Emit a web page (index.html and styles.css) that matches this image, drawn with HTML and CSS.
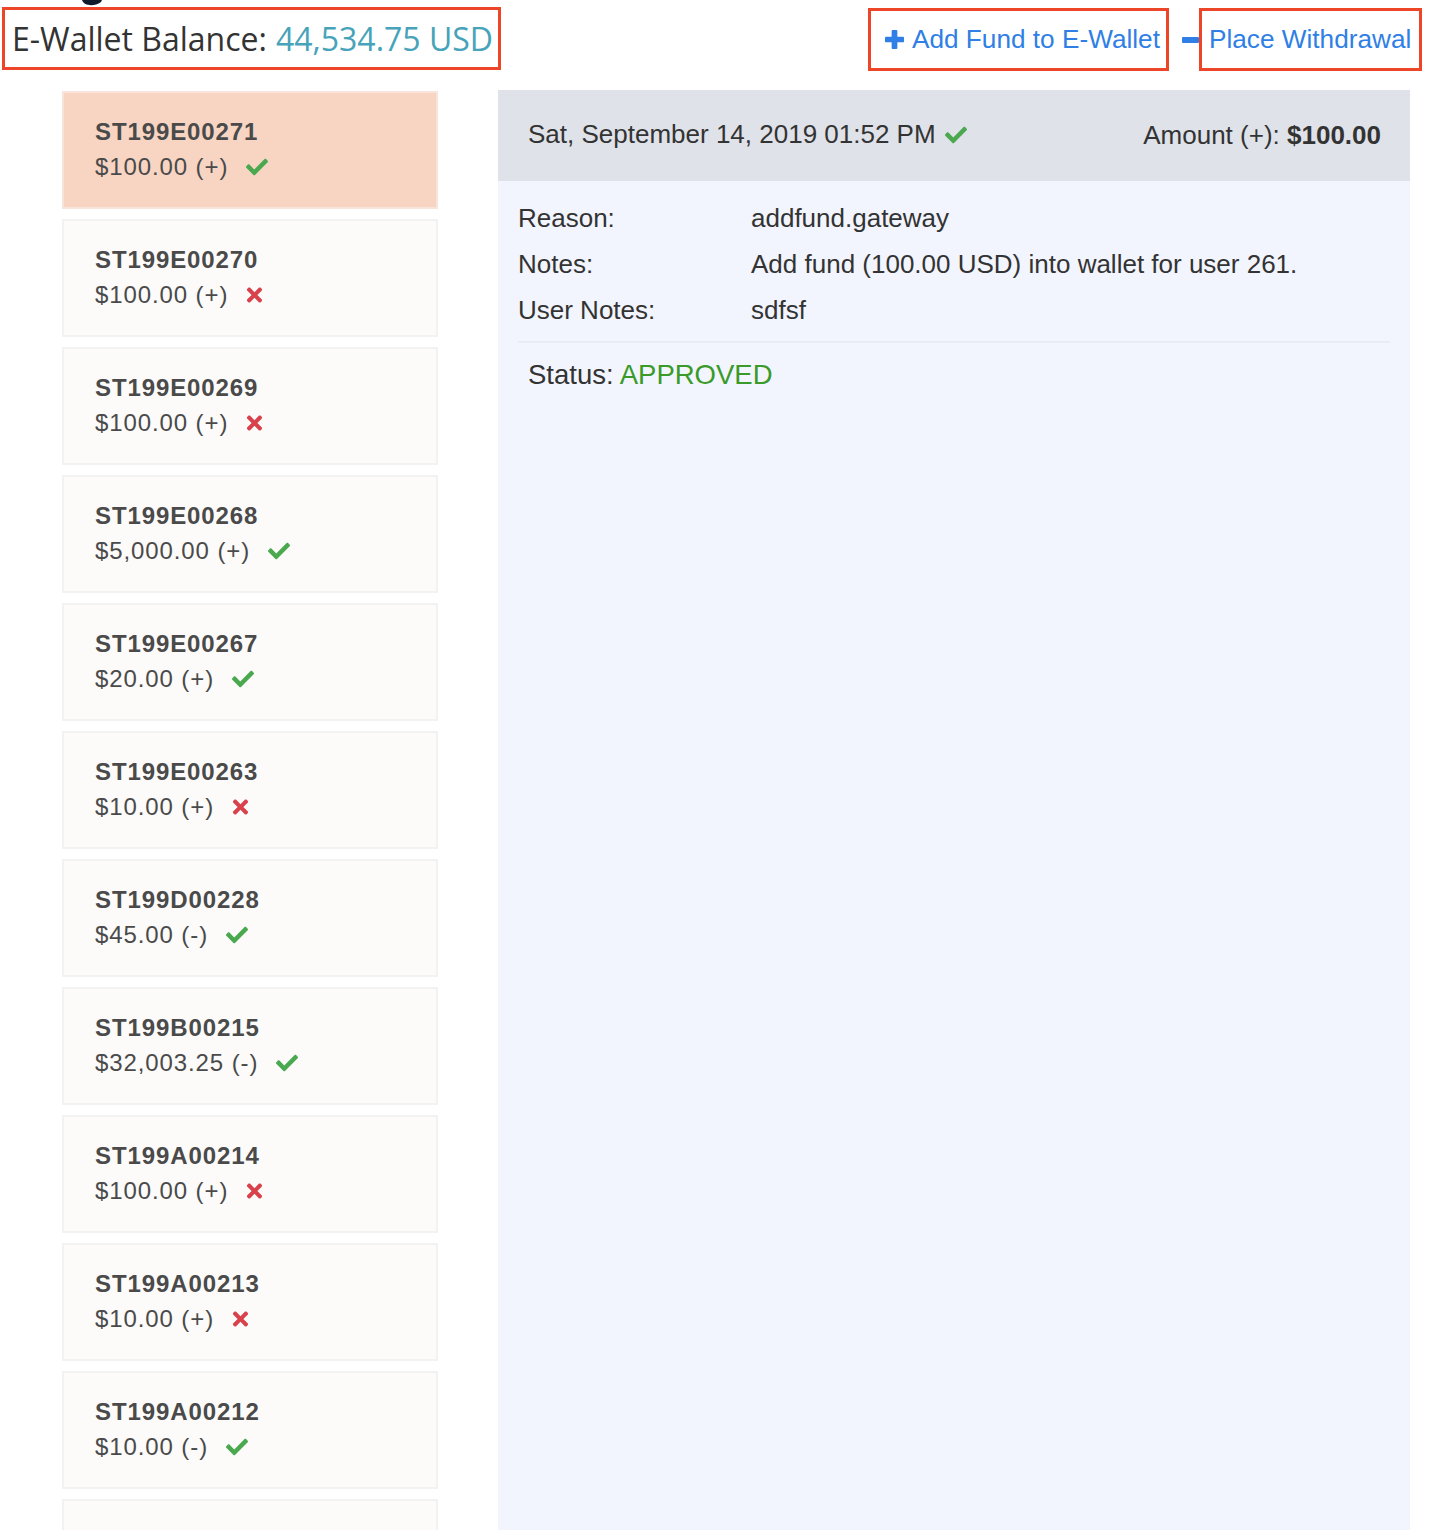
FILE: index.html
```html
<!DOCTYPE html>
<html lang="en">
<head>
<meta charset="utf-8">
<title>E-Wallet</title>
<link rel="stylesheet" href="styles.css">
</head>
<body>
<svg class="title-tail" viewBox="0 0 24 8" aria-hidden="true"><path d="M2 0 C4 6 14 7 21 2 L22 0 Z"/></svg>
<header class="topbar">
  <div class="balance hl">E-Wallet Balance: <span class="balance-amount">44,534.75 USD</span></div>
  <nav class="actions">
    <a class="action hl add" href="#"><svg class="ico-plus" viewBox="0 0 20 20"><rect x="7" y="0" width="6" height="20" rx="1"/><rect x="0" y="7" width="20" height="6" rx="1"/></svg>Add Fund to E-Wallet</a>
    <span class="minus"></span>
    <a class="action hl withdraw" href="#">Place Withdrawal</a>
  </nav>
</header>

<main class="main">
  <section class="list">
    <div class="card selected"><div class="cid">ST199E00271</div><div class="camt">$100.00 (+)<svg class="ok" viewBox="0 0 512 512"><path d="M173.9 439.4l-166.4-166.4c-10-10-10-26.2 0-36.2l36.2-36.2c10-10 26.2-10 36.2 0L192 312.7 432.1 72.6c10-10 26.2-10 36.2 0l36.2 36.2c10 10 10 26.2 0 36.2l-294.4 294.4c-10 10-26.2 10-36.2 0z"/></svg></div></div>
    <div class="card"><div class="cid">ST199E00270</div><div class="camt">$100.00 (+)<svg class="no" viewBox="0 0 352 512"><path d="M242.7 256l100.1-100.1c12.3-12.3 12.3-32.2 0-44.5l-22.2-22.2c-12.3-12.3-32.2-12.3-44.5 0L176 189.3 75.9 89.2c-12.3-12.3-32.2-12.3-44.5 0L9.2 111.5c-12.3 12.3-12.3 32.2 0 44.5L109.3 256 9.2 356.1c-12.3 12.3-12.3 32.2 0 44.5l22.2 22.2c12.3 12.3 32.2 12.3 44.5 0L176 322.7l100.1 100.1c12.3 12.3 32.2 12.3 44.5 0l22.2-22.2c12.3-12.3 12.3-32.2 0-44.5L242.7 256z"/></svg></div></div>
    <div class="card"><div class="cid">ST199E00269</div><div class="camt">$100.00 (+)<svg class="no" viewBox="0 0 352 512"><path d="M242.7 256l100.1-100.1c12.3-12.3 12.3-32.2 0-44.5l-22.2-22.2c-12.3-12.3-32.2-12.3-44.5 0L176 189.3 75.9 89.2c-12.3-12.3-32.2-12.3-44.5 0L9.2 111.5c-12.3 12.3-12.3 32.2 0 44.5L109.3 256 9.2 356.1c-12.3 12.3-12.3 32.2 0 44.5l22.2 22.2c12.3 12.3 32.2 12.3 44.5 0L176 322.7l100.1 100.1c12.3 12.3 32.2 12.3 44.5 0l22.2-22.2c12.3-12.3 12.3-32.2 0-44.5L242.7 256z"/></svg></div></div>
    <div class="card"><div class="cid">ST199E00268</div><div class="camt">$5,000.00 (+)<svg class="ok" viewBox="0 0 512 512"><path d="M173.9 439.4l-166.4-166.4c-10-10-10-26.2 0-36.2l36.2-36.2c10-10 26.2-10 36.2 0L192 312.7 432.1 72.6c10-10 26.2-10 36.2 0l36.2 36.2c10 10 10 26.2 0 36.2l-294.4 294.4c-10 10-26.2 10-36.2 0z"/></svg></div></div>
    <div class="card"><div class="cid">ST199E00267</div><div class="camt">$20.00 (+)<svg class="ok" viewBox="0 0 512 512"><path d="M173.9 439.4l-166.4-166.4c-10-10-10-26.2 0-36.2l36.2-36.2c10-10 26.2-10 36.2 0L192 312.7 432.1 72.6c10-10 26.2-10 36.2 0l36.2 36.2c10 10 10 26.2 0 36.2l-294.4 294.4c-10 10-26.2 10-36.2 0z"/></svg></div></div>
    <div class="card"><div class="cid">ST199E00263</div><div class="camt">$10.00 (+)<svg class="no" viewBox="0 0 352 512"><path d="M242.7 256l100.1-100.1c12.3-12.3 12.3-32.2 0-44.5l-22.2-22.2c-12.3-12.3-32.2-12.3-44.5 0L176 189.3 75.9 89.2c-12.3-12.3-32.2-12.3-44.5 0L9.2 111.5c-12.3 12.3-12.3 32.2 0 44.5L109.3 256 9.2 356.1c-12.3 12.3-12.3 32.2 0 44.5l22.2 22.2c12.3 12.3 32.2 12.3 44.5 0L176 322.7l100.1 100.1c12.3 12.3 32.2 12.3 44.5 0l22.2-22.2c12.3-12.3 12.3-32.2 0-44.5L242.7 256z"/></svg></div></div>
    <div class="card"><div class="cid">ST199D00228</div><div class="camt">$45.00 (-)<svg class="ok" viewBox="0 0 512 512"><path d="M173.9 439.4l-166.4-166.4c-10-10-10-26.2 0-36.2l36.2-36.2c10-10 26.2-10 36.2 0L192 312.7 432.1 72.6c10-10 26.2-10 36.2 0l36.2 36.2c10 10 10 26.2 0 36.2l-294.4 294.4c-10 10-26.2 10-36.2 0z"/></svg></div></div>
    <div class="card"><div class="cid">ST199B00215</div><div class="camt">$32,003.25 (-)<svg class="ok" viewBox="0 0 512 512"><path d="M173.9 439.4l-166.4-166.4c-10-10-10-26.2 0-36.2l36.2-36.2c10-10 26.2-10 36.2 0L192 312.7 432.1 72.6c10-10 26.2-10 36.2 0l36.2 36.2c10 10 10 26.2 0 36.2l-294.4 294.4c-10 10-26.2 10-36.2 0z"/></svg></div></div>
    <div class="card"><div class="cid">ST199A00214</div><div class="camt">$100.00 (+)<svg class="no" viewBox="0 0 352 512"><path d="M242.7 256l100.1-100.1c12.3-12.3 12.3-32.2 0-44.5l-22.2-22.2c-12.3-12.3-32.2-12.3-44.5 0L176 189.3 75.9 89.2c-12.3-12.3-32.2-12.3-44.5 0L9.2 111.5c-12.3 12.3-12.3 32.2 0 44.5L109.3 256 9.2 356.1c-12.3 12.3-12.3 32.2 0 44.5l22.2 22.2c12.3 12.3 32.2 12.3 44.5 0L176 322.7l100.1 100.1c12.3 12.3 32.2 12.3 44.5 0l22.2-22.2c12.3-12.3 12.3-32.2 0-44.5L242.7 256z"/></svg></div></div>
    <div class="card"><div class="cid">ST199A00213</div><div class="camt">$10.00 (+)<svg class="no" viewBox="0 0 352 512"><path d="M242.7 256l100.1-100.1c12.3-12.3 12.3-32.2 0-44.5l-22.2-22.2c-12.3-12.3-32.2-12.3-44.5 0L176 189.3 75.9 89.2c-12.3-12.3-32.2-12.3-44.5 0L9.2 111.5c-12.3 12.3-12.3 32.2 0 44.5L109.3 256 9.2 356.1c-12.3 12.3-12.3 32.2 0 44.5l22.2 22.2c12.3 12.3 32.2 12.3 44.5 0L176 322.7l100.1 100.1c12.3 12.3 32.2 12.3 44.5 0l22.2-22.2c12.3-12.3 12.3-32.2 0-44.5L242.7 256z"/></svg></div></div>
    <div class="card"><div class="cid">ST199A00212</div><div class="camt">$10.00 (-)<svg class="ok" viewBox="0 0 512 512"><path d="M173.9 439.4l-166.4-166.4c-10-10-10-26.2 0-36.2l36.2-36.2c10-10 26.2-10 36.2 0L192 312.7 432.1 72.6c10-10 26.2-10 36.2 0l36.2 36.2c10 10 10 26.2 0 36.2l-294.4 294.4c-10 10-26.2 10-36.2 0z"/></svg></div></div>
    <div class="card"></div>
  </section>

  <section class="detail">
    <div class="detail-head">
      <div class="date">Sat, September 14, 2019 01:52 PM<svg class="ok" viewBox="0 0 512 512"><path d="M173.9 439.4l-166.4-166.4c-10-10-10-26.2 0-36.2l36.2-36.2c10-10 26.2-10 36.2 0L192 312.7 432.1 72.6c10-10 26.2-10 36.2 0l36.2 36.2c10 10 10 26.2 0 36.2l-294.4 294.4c-10 10-26.2 10-36.2 0z"/></svg></div>
      <div class="amount">Amount (+): <b>$100.00</b></div>
    </div>
    <div class="detail-body">
      <div class="rows">
        <div class="row"><span class="k">Reason:</span><span class="v">addfund.gateway</span></div>
        <div class="row"><span class="k">Notes:</span><span class="v">Add fund (100.00 USD) into wallet for user 261.</span></div>
        <div class="row"><span class="k">User Notes:</span><span class="v">sdfsf</span></div>
      </div>
      <div class="status">Status: <span class="approved">APPROVED</span></div>
    </div>
  </section>
</main>
</body>
</html>
```

FILE: styles.css
```css
html, body {
  margin: 0;
  padding: 0;
  background: #ffffff;
  height: 1530px;
  overflow: hidden;
}
body {
  font-family: "Liberation Sans", Arial, sans-serif;
  color: #333333;
  position: relative;
}
.title-tail {
  position: absolute;
  left: 80px;
  top: 0;
  width: 24px;
  height: 8px;
  fill: #0f1b2d;
}
.topbar {
  display: flex;
  justify-content: space-between;
  align-items: flex-start;
  padding: 7px 14px 0 2px;
}
.hl {
  border: 3px solid #ec4528;
  box-sizing: border-box;
  height: 63px;
  display: flex;
  align-items: center;
}
.balance {
  font-family: "Open Sans", sans-serif;
  font-size: 32px;
  color: #333;
  padding: 0 6px 0 7px;
  width: 499px;
  white-space: nowrap;
}
.balance-amount {
  color: #47a3ba;
  margin-left: 9px;
}
.actions {
  display: flex;
  align-items: flex-start;
}
.action {
  font-size: 26.2px;
  color: #2f7fe6;
  text-decoration: none;
  white-space: nowrap;
}
.add {
  width: 301px;
  padding-left: 14px;
  margin-top: 1px;
}
.ico-plus {
  width: 19px;
  height: 19px;
  fill: #2f7fe6;
  margin-right: 8px;
  flex: none;
}
.minus {
  width: 17px;
  height: 6px;
  background: #2f7fe6;
  margin: 30px 0 0 13px;
  border-radius: 1px;
}
.withdraw {
  width: 223px;
  padding-left: 7px;
  margin-top: 1px;
}
.main {
  display: flex;
  align-items: flex-start;
  margin-top: 19px;
  height: 1440px;
  overflow: hidden;
}
.list {
  display: flex;
  flex-direction: column;
  gap: 10px;
  margin-left: 62px;
  margin-top: 1px;
  width: 376px;
  flex: none;
}
.card {
  box-sizing: border-box;
  height: 118px;
  flex: none;
  background: #fcfbfa;
  border: 2px solid #f3f2f0;
  padding: 24px 0 0 31px;
  letter-spacing: 0.9px;
  font-size: 24px;
  color: #4a4a4a;
}
.card.selected {
  background: #f8d5c3;
  border-color: #f8e4da;
}
.cid {
  font-weight: bold;
  line-height: 30px;
}
.camt {
  margin-top: 5px;
  line-height: 30px;
  display: flex;
  align-items: center;
  gap: 18px;
  white-space: nowrap;
}
.ok {
  width: 22px;
  height: 22px;
  fill: #4aa84f;
  flex: none;
}
.no {
  width: 17px;
  height: 22px;
  fill: #d9414b;
  flex: none;
}
.detail {
  margin-left: 60px;
  width: 912px;
  height: 1440px;
  background: #f2f5fd;
  flex: none;
}
.detail-head {
  background: #dfe2e9;
  height: 91px;
  display: flex;
  justify-content: space-between;
  align-items: center;
  padding: 0 29px 0 30px;
  font-size: 26px;
  color: #333;
}
.date {
  display: flex;
  align-items: center;
  gap: 9px;
  margin-top: -2px;
  white-space: nowrap;
}
.amount b {
  font-weight: bold;
}
.detail-body {
  padding: 14px 20px 0 20px;
}
.rows {
  border-bottom: 2px solid #e9ecf3;
  padding-bottom: 8px;
}
.row {
  display: flex;
  font-size: 26px;
  line-height: 46px;
}
.k {
  width: 233px;
  flex: none;
}
.status {
  font-size: 27.5px;
  padding: 16px 0 0 10px;
}
.approved {
  color: #3a9a2a;
}
```
